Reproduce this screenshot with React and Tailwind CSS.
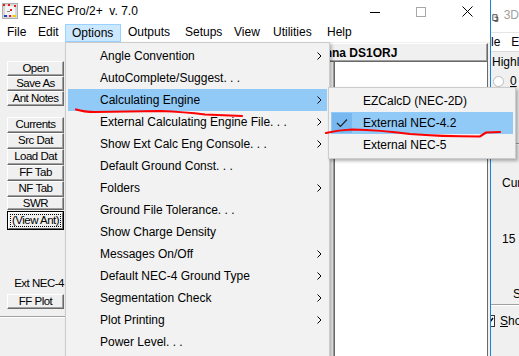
import React from "react";

function AppIcon() {
  return (
    <svg width="16" height="16" viewBox="0 0 16 16">
      <rect x="0.5" y="0.5" width="15" height="15" fill="#d8d8d8" stroke="#b0b0b0" />
      <rect x="3" y="3" width="10" height="9" fill="#f4f4f4" />
      <rect x="1" y="1" width="2" height="2" fill="#e02020" />
      <rect x="6" y="1" width="2" height="2" fill="#e02020" />
      <rect x="12" y="2" width="2" height="2" fill="#e02020" />
      <rect x="8" y="6" width="2" height="2" fill="#e02020" />
      <rect x="5" y="8" width="3" height="1" fill="#888" />
      <rect x="2" y="12" width="3" height="2" fill="#2040d0" />
      <rect x="11" y="12" width="3" height="2" fill="#f0d000" />
      <rect x="7" y="12" width="2" height="2" fill="#e02020" />
    </svg>
  );
}

function Arrow() {
  return (
    <svg width="5" height="8" viewBox="0 0 5 8" className="shrink-0">
      <path d="M0.5 0.5 L4 4 L0.5 7.5" fill="none" stroke="#000" strokeWidth="1" />
    </svg>
  );
}

function Btn({ children, className = "h-[15px]" }) {
  return (
    <div
      className={`w-[57px] ${className} flex items-center justify-center bg-[#f0f0f0] border border-t-white border-l-white border-r-[#696969] border-b-[#696969] shadow-[inset_-1px_-1px_0_#a0a0a0] text-[11.5px] tracking-[-0.5px] leading-none`}
    >
      {children}
    </div>
  );
}

function MenuItem({ label, sub, active }) {
  return (
    <div
      className={`h-[22px] flex items-center pl-[32px] pr-[5px] whitespace-nowrap ${
        active ? "bg-[#91c9f7]" : ""
      }`}
    >
      <span className="flex-1">{label}</span>
      {sub ? <Arrow /> : null}
    </div>
  );
}

const menuItems = [
  ["Angle Convention", true],
  ["AutoComplete/Suggest. . .", false],
  ["Calculating Engine", true, true],
  ["External Calculating Engine File. . .", true],
  ["Show Ext Calc Eng Console. . .", true],
  ["Default Ground Const. . .", false],
  ["Folders", true],
  ["Ground File Tolerance. . .", false],
  ["Show Charge Density", false],
  ["Messages On/Off", true],
  ["Default NEC-4 Ground Type", true],
  ["Segmentation Check", true],
  ["Plot Printing", true],
  ["Power Level. . .", false],
];

export default function App() {
  return (
    <div className="relative w-[519px] h-[356px] overflow-hidden flex bg-white font-['Liberation_Sans',Arial,sans-serif] text-[12px] text-black">
      {/* Main EZNEC window */}
      <div className="w-[490px] h-full flex flex-col bg-[#f0f0f0] shrink-0">
        {/* Title bar */}
        <div className="h-[22px] bg-white flex items-center shrink-0">
          <div className="ml-[2px] w-[16px] h-[16px]">
            <AppIcon />
          </div>
          <span className="ml-[5px] whitespace-pre">EZNEC Pro/2+  v. 7.0</span>
          <div className="ml-auto flex h-full">
            <div className="w-[46px] h-full flex items-center justify-center">
              <div className="w-[10px] h-px bg-black mt-[2px]" />
            </div>
            <div className="w-[46px] h-full flex items-center justify-center">
              <div className="w-[10px] h-[10px] border border-[#a8a8a8] mt-[1px]" />
            </div>
            <div className="w-[46px] h-full flex items-center justify-center">
              <svg width="11" height="11" viewBox="0 0 11 11">
                <path d="M0.5 0.5 L10.5 10.5 M10.5 0.5 L0.5 10.5" stroke="#000" strokeWidth="1" />
              </svg>
            </div>
          </div>
        </div>
        {/* Menu bar */}
        <div className="h-[20px] bg-white flex items-end shrink-0">
          <div className="w-[31px] h-full flex items-center pl-[7px]">File</div>
          <div className="w-[34px] h-full flex items-center pl-[7px]">Edit</div>
          <div className="w-[56px] h-[18px] flex items-center pl-[6px] bg-[#cce8ff] border border-[#99d1ff]">Options</div>
          <div className="w-[57px] h-full flex items-center pl-[7px]">Outputs</div>
          <div className="w-[49px] h-full flex items-center pl-[7px]">Setups</div>
          <div className="w-[39px] h-full flex items-center pl-[7px]">View</div>
          <div className="w-[54px] h-full flex items-center pl-[7px]">Utilities</div>
          <div className="h-full flex items-center pl-[7px]">Help</div>
        </div>
        {/* Body */}
        <div className="flex-1 flex min-h-0">
          {/* Left button panel */}
          <div className="w-[66px] flex flex-col pl-[7px] pt-[19px]">
            <Btn>Open</Btn>
            <Btn>Save As</Btn>
            <Btn>Ant Notes</Btn>
            <div className="mt-[11px]" />
            <Btn className="h-[16px]">Currents</Btn>
            <Btn className="h-[16px]">Src Dat</Btn>
            <Btn className="h-[16px]">Load Dat</Btn>
            <Btn className="h-[16px]">FF Tab</Btn>
            <Btn className="h-[16px]">NF Tab</Btn>
            <Btn className="h-[13px]">SWR</Btn>
            <div className="mt-px w-[57px] h-[19px] border border-black bg-[#f0f0f0] flex">
              <div className="flex-1 flex items-center justify-center border border-t-white border-l-white border-r-[#696969] border-b-[#696969] text-[11.5px] tracking-[-0.5px] leading-none">
                <span className="outline outline-1 outline-dotted outline-black px-[1px]">(View Ant)</span>
              </div>
            </div>
            <div className="mt-[47px] w-[57px] h-[12px] text-right text-[11.5px] tracking-[-0.5px] leading-[12px]">Ext NEC-4</div>
            <div className="mt-[5px]" />
            <Btn>FF Plot</Btn>
            <div className="mt-[7px] -ml-[7px] w-[66px] h-[2px] border-t border-t-[#a0a0a0] border-b border-b-white" />
          </div>
          <div className="w-px bg-[#a0a0a0]" />
          <div className="w-px bg-white" />
          {/* Content */}
          <div className="flex-1 flex flex-col pt-px pr-[2px]">
            <div className="h-[19px] flex items-center pl-[229px] border border-t-white border-l-white border-r-[#696969] border-b-[#696969] shadow-[inset_-1px_-1px_0_#a0a0a0] font-bold whitespace-nowrap overflow-hidden">
              Antenna DS1ORJ
            </div>
            <div className="flex-1 flex">
              <div className="flex-1" />
              <div className="w-[155px] bg-white border-l border-l-[#a0a0a0] border-r border-r-[#696969] shadow-[inset_1px_0_0_#696969]" />
            </div>
          </div>
        </div>
      </div>
      {/* Active window border */}
      <div className="w-px h-full bg-[#1883d7] shrink-0" />
      {/* Partially visible 3D window */}
      <div className="flex-1 h-full flex flex-col bg-[#f0f0f0] overflow-hidden text-[12px]">
        <div className="h-[33px] bg-white flex items-end pb-[8px] shrink-0 border-b border-b-[#e5e5e5]">
          <svg width="8" height="10" viewBox="0 0 8 10" className="ml-[1px] mb-[1px]">
            <path d="M1 1 H6 V8 H1 Z M3 4 H7 V9 H3" fill="none" stroke="#333" strokeWidth="1" />
          </svg>
          <span className="ml-[5px] text-[#a0a0a0] whitespace-nowrap">3D</span>
        </div>
        <div className="h-[19px] bg-white flex items-center shrink-0 whitespace-nowrap border-b border-b-[#dadada]">
          <span className="-ml-[10px]">File</span>
          <span className="ml-[11px]">Edit</span>
        </div>
        <div className="mt-[3px] h-[14px] leading-[14px] pl-[1px] whitespace-nowrap">Highlight</div>
        <div className="mt-[6px] h-[12px] flex items-center whitespace-nowrap">
          <div className="ml-[2px] w-[11px] h-[11px] rounded-full border border-[#bcbcbc] bg-white" />
          <span className="ml-[6px] underline">0</span>
        </div>
        <div className="mt-[56px] h-[2px] border-t border-t-[#a0a0a0] border-b border-b-white" />
        <div className="mt-[31px] h-[14px] leading-[14px] pl-[11px] whitespace-nowrap">Cursor</div>
        <div className="mt-[42px] h-[14px] leading-[14px] pl-[11px] whitespace-nowrap">15</div>
        <div className="mt-[41px] h-[14px] leading-[14px] pl-[22px] whitespace-nowrap">S</div>
        <div className="mt-[3px] h-[2px] border-t border-t-[#a0a0a0] border-b border-b-white" />
        <div className="mt-[9px] h-[12px] flex items-center whitespace-nowrap">
          <div className="-ml-[6px] w-[12px] h-[12px] border border-[#333] bg-white flex items-center justify-center">
            <svg width="8" height="8" viewBox="0 0 8 8">
              <path d="M1 4 L3 6.5 L7 1" fill="none" stroke="#000" strokeWidth="1.5" />
            </svg>
          </div>
          <span className="ml-[5px]">
            <span className="underline">S</span>how
          </span>
        </div>
      </div>

      {/* Options dropdown menu */}
      <div className="absolute left-[65px] top-[42px] w-[265px] h-[330px] bg-[#f2f2f2] border border-[#cccccc] px-[2px] pt-[2px] shadow-[2px_2px_3px_rgba(0,0,0,0.25)]">
        {menuItems.map(([label, sub, active]) => (
          <MenuItem key={label} label={label} sub={sub} active={active} />
        ))}
      </div>

      {/* Calculating Engine submenu */}
      <div className="absolute left-[328px] top-[87px] w-[188px] bg-[#f2f2f2] border border-[#cccccc] px-[2px] py-[2px] shadow-[2px_2px_3px_rgba(0,0,0,0.3)]">
        <div className="h-[22px] flex items-center pl-[32px] whitespace-nowrap">EZCalcD (NEC-2D)</div>
        <div className="h-[22px] flex items-center bg-[#91c9f7] whitespace-nowrap">
          <div className="ml-px w-[20px] h-[20px] bg-[#78b8f0] flex items-center justify-center">
            <svg width="12" height="10" viewBox="0 0 12 10">
              <path d="M1 5 L4.5 8.5 L11 1.5" fill="none" stroke="#222" strokeWidth="1.2" />
            </svg>
          </div>
          <span className="ml-[11px]">External NEC-4.2</span>
        </div>
        <div className="h-[22px] flex items-center pl-[32px] whitespace-nowrap">External NEC-5</div>
      </div>

      {/* Hand-drawn red annotations */}
      <svg className="absolute left-0 top-0 pointer-events-none" width="519" height="356" viewBox="0 0 519 356">
        <path
          d="M76 109.5 Q 84 112 95 112 L 160 111 Q 185 112 205 114.5 L 242 116"
          fill="none"
          stroke="#ff0000"
          strokeWidth="2.2"
          strokeLinecap="round"
        />
        <path
          d="M326 133 Q 338 130 352 129.5 Q 380 130 410 134 Q 440 136.5 480 136.5 L 486 132.5 L 500 132"
          fill="none"
          stroke="#ff0000"
          strokeWidth="2.2"
          strokeLinecap="round"
        />
      </svg>
    </div>
  );
}
